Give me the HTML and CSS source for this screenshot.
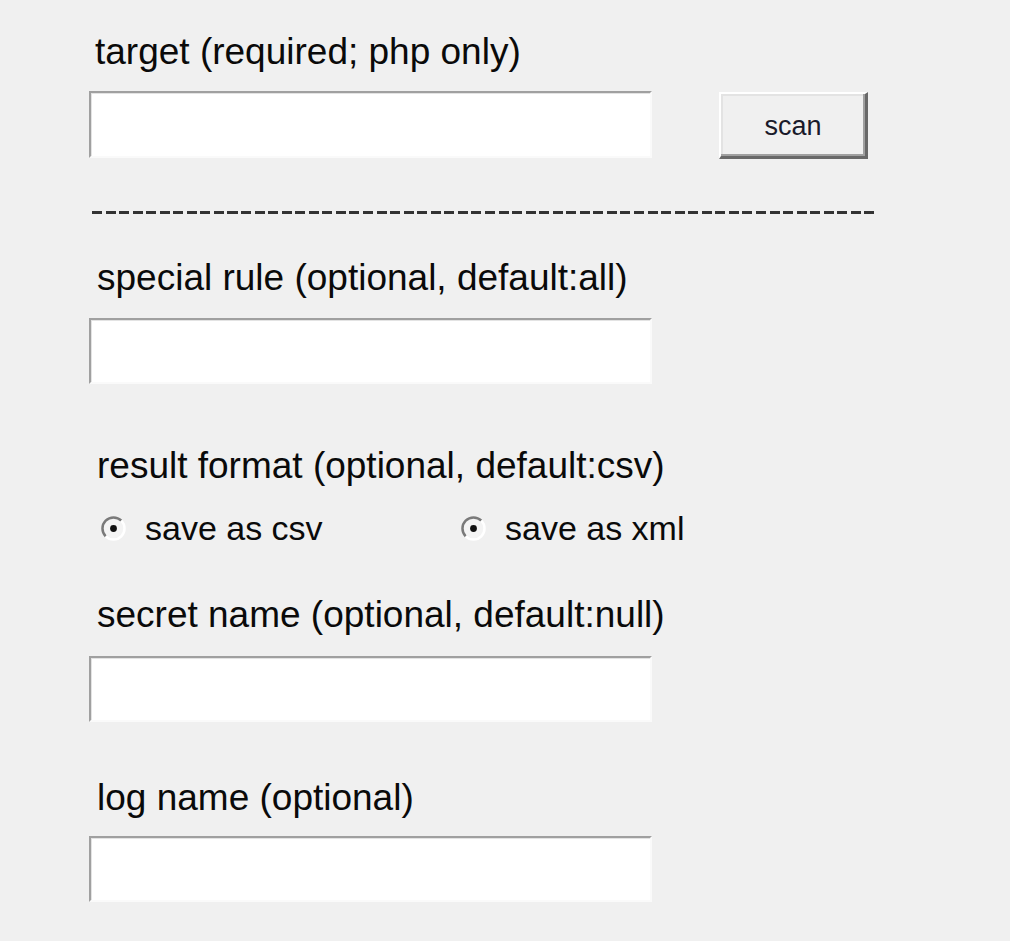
FILE: index.html
```html
<!DOCTYPE html>
<html>
<head>
<meta charset="utf-8">
<link rel="stylesheet" href="styles.css">
</head>
<body>
<div class="form">
  <div class="label l-target">target (required; php only)</div>
  <div class="row">
    <div class="field"></div>
    <div class="btn">scan</div>
  </div>
  <div class="sep"></div>
  <div class="label l-rule">special rule (optional, default:all)</div>
  <div class="field f-rule"></div>
  <div class="label l-format">result format (optional, default:csv)</div>
  <div class="radios">
    <div class="radio">
      <svg class="dot" width="27" height="27" viewBox="0 0 27 27">
        <circle cx="13.5" cy="13.5" r="11" fill="#f4f4f4"/>
        <path d="M5.7 21.3 A11 11 0 0 1 21.3 5.7" fill="none" stroke="#7a7a7a" stroke-width="2.5"/>
        <path d="M21.3 5.7 A11 11 0 0 1 5.7 21.3" fill="none" stroke="#ffffff" stroke-width="2.5"/>
        <circle cx="13.5" cy="13.5" r="3.4" fill="#111"/>
      </svg>
      <span>save as csv</span>
    </div>
    <div class="radio">
      <svg class="dot" width="27" height="27" viewBox="0 0 27 27">
        <circle cx="13.5" cy="13.5" r="11" fill="#f4f4f4"/>
        <path d="M5.7 21.3 A11 11 0 0 1 21.3 5.7" fill="none" stroke="#7a7a7a" stroke-width="2.5"/>
        <path d="M21.3 5.7 A11 11 0 0 1 5.7 21.3" fill="none" stroke="#ffffff" stroke-width="2.5"/>
        <circle cx="13.5" cy="13.5" r="3.4" fill="#111"/>
      </svg>
      <span>save as xml</span>
    </div>
  </div>
  <div class="label l-secret">secret name (optional, default:null)</div>
  <div class="field f-secret"></div>
  <div class="label l-log">log name (optional)</div>
  <div class="field f-log"></div>
</div>
</body>
</html>
```

FILE: styles.css
```css
html, body {
  margin: 0;
  padding: 0;
  background: #f0f0f0;
}
body {
  width: 1010px;
  height: 941px;
  overflow: hidden;
  font-family: "Liberation Sans", Arial, sans-serif;
  color: #0a0a0a;
}
.form {
  display: flex;
  flex-direction: column;
  align-items: flex-start;
  padding: 32px 0 0 89px;
}
.label {
  font-size: 37px;
  line-height: 40px;
  height: 40px;
  padding-left: 8px;
  white-space: nowrap;
}
.l-target { padding-left: 6px; }
.row {
  display: flex;
  align-items: flex-start;
  gap: 67px;
  margin-top: 19px;
}
.field {
  box-sizing: border-box;
  width: 563px;
  height: 67px;
  background: #ffffff;
  border-top: 2px solid #a0a0a0;
  border-left: 2px solid #a0a0a0;
  border-right: 2px solid #fafafa;
  border-bottom: 2px solid #fafafa;
  box-shadow: inset 1px 1px 0 #e3e3e3;
}
.btn {
  box-sizing: border-box;
  width: 149px;
  height: 67px;
  margin-top: 1px;
  background: #f0f0f0;
  border-top: 2px solid #ffffff;
  border-left: 2px solid #ffffff;
  border-right: 3px solid #696969;
  border-bottom: 3px solid #696969;
  box-shadow: inset -2px -2px 0 #a0a0a0, inset 2px 2px 0 #e3e3e3;
  display: flex;
  align-items: center;
  justify-content: center;
  font-size: 27px;
  color: #1a1a2a;
  padding-top: 3px;
}
.sep {
  width: 782px;
  height: 3px;
  margin: 52px 0 0 3px;
  background: repeating-linear-gradient(90deg, #333333 0 10px, transparent 10px 13.55px);
}
.l-rule { margin-top: 44px; }
.f-rule { margin-top: 20px; height: 66px; }
.l-format { margin-top: 62px; }
.radios {
  display: grid;
  grid-template-columns: 360px auto;
  margin: 22px 0 0 11px;
  height: 40px;
  align-items: center;
}
.radio {
  display: flex;
  align-items: center;
  gap: 18px;
  font-size: 34px;
  line-height: 40px;
  white-space: nowrap;
}
.dot { display: block; }
.l-secret { margin-top: 47px; }
.f-secret { margin-top: 21px; height: 66px; }
.l-log { margin-top: 56px; }
.f-log { margin-top: 18px; height: 66px; }
```
